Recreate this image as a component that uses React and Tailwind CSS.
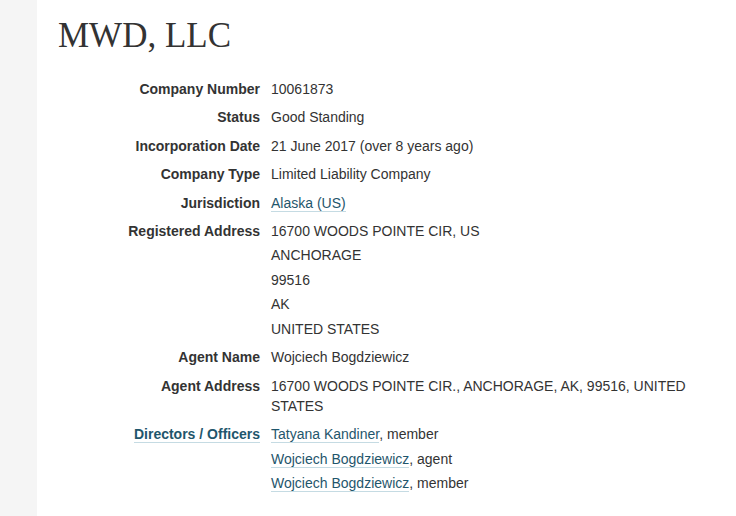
const rows = [
  { label: 'Company Number', value: ['10061873'] },
  { label: 'Status', value: ['Good Standing'] },
  { label: 'Incorporation Date', value: ['21 June 2017 (over 8 years ago)'] },
  { label: 'Company Type', value: ['Limited Liability Company'] },
  { label: 'Jurisdiction', link: 'Alaska (US)' },
  {
    label: 'Registered Address',
    value: ['16700 WOODS POINTE CIR, US', 'ANCHORAGE', '99516', 'AK', 'UNITED STATES'],
  },
  { label: 'Agent Name', value: ['Wojciech Bogdziewicz'] },
  { label: 'Agent Address', value: ['16700 WOODS POINTE CIR., ANCHORAGE, AK, 99516, UNITED STATES'] },
]

const officers = [
  { name: 'Tatyana Kandiner', role: 'member' },
  { name: 'Wojciech Bogdziewicz', role: 'agent' },
  { name: 'Wojciech Bogdziewicz', role: 'member' },
]

function Link({ children, bold }) {
  return (
    <a
      href="#"
      className={`text-[#1f566c] border-b border-[#c5dbe3] ${bold ? 'font-bold' : ''}`}
    >
      {children}
    </a>
  )
}

export default function App() {
  return (
    <div
      className="min-h-[516px] flex bg-white text-[#333]"
      style={{ fontFamily: '"Liberation Sans", Arial, sans-serif' }}
    >
      <aside className="w-[37px] shrink-0 bg-[#f5f5f5]" />
      <main className="flex-1 pl-[21px] pr-[20px] pt-[13px]">
        <h1
          className="text-[35px] leading-[46px] text-[#333] mb-[20px]"
          style={{ fontFamily: '"Liberation Serif", "Times New Roman", serif' }}
        >
          MWD, LLC
        </h1>
        <dl className="grid grid-cols-[202px_1fr] gap-x-[11px] text-[14px] leading-[20px]">
          {rows.map(r => (
            <div key={r.label} className="contents">
              <dt className="text-right font-bold text-[#333] mb-[8.4px]">{r.label}</dt>
              <dd className="mb-[8.4px] flex flex-col gap-[4.5px]">
                {r.link ? (
                  <span><Link>{r.link}</Link></span>
                ) : (
                  r.value.map((v, i) => <span key={i}>{v}</span>)
                )}
              </dd>
            </div>
          ))}
          <dt className="text-right mb-[8.4px]">
            <Link bold>Directors / Officers</Link>
          </dt>
          <dd className="mb-[8.4px] flex flex-col gap-[4.5px]">
            {officers.map((o, i) => (
              <span key={i}>
                <Link>{o.name}</Link>, {o.role}
              </span>
            ))}
          </dd>
        </dl>
      </main>
    </div>
  )
}
